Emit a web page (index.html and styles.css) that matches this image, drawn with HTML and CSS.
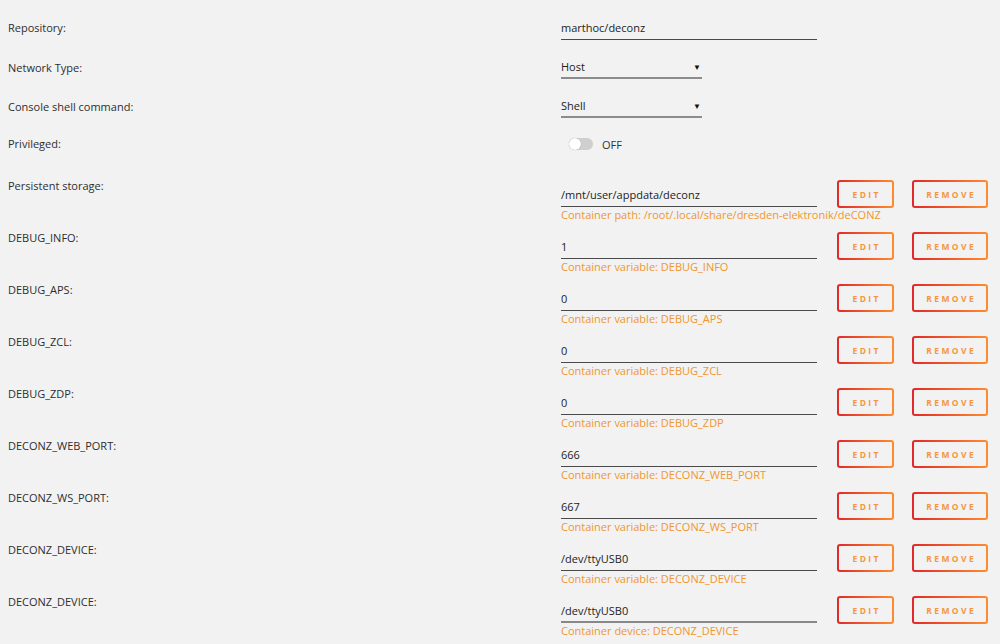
FILE: index.html
```html
<!DOCTYPE html>
<html lang="en">
<head>
    <meta charset="UTF-8">
    <title>Container settings</title>
    <link rel="stylesheet" href="styles.css">
</head>
<body>
    <div class="settings">
        <div class="row r40">
            <div class="label">Repository:</div>
            <div class="input">marthoc/deconz</div>
        </div>
        <div class="row r40">
            <div class="label">Network Type:</div>
            <div class="select">Host<span class="caret">▼</span></div>
        </div>
        <div class="row r38">
            <div class="label">Console shell command:</div>
            <div class="select">Shell<span class="caret">▼</span></div>
        </div>
        <div class="row r36">
            <div class="label">Privileged:</div>
            <div class="toggle">
                <span class="switch"><span class="knob"></span></span>
                <span class="toggle-text">OFF</span>
            </div>
        </div>

        <div class="env-list">
            <div class="env-row">
                <div class="label">Persistent storage:</div>
                <div class="env-field">
                    <div class="input">/mnt/user/appdata/deconz</div>
                    <div class="hint">Container path: /root/.local/share/dresden-elektronik/deCONZ</div>
                </div>
                <button class="btn btn-edit"><span>EDIT</span></button>
                <button class="btn btn-remove"><span>REMOVE</span></button>
            </div>
            <div class="env-row">
                <div class="label">DEBUG_INFO:</div>
                <div class="env-field">
                    <div class="input">1</div>
                    <div class="hint">Container variable: DEBUG_INFO</div>
                </div>
                <button class="btn btn-edit"><span>EDIT</span></button>
                <button class="btn btn-remove"><span>REMOVE</span></button>
            </div>
            <div class="env-row">
                <div class="label">DEBUG_APS:</div>
                <div class="env-field">
                    <div class="input">0</div>
                    <div class="hint">Container variable: DEBUG_APS</div>
                </div>
                <button class="btn btn-edit"><span>EDIT</span></button>
                <button class="btn btn-remove"><span>REMOVE</span></button>
            </div>
            <div class="env-row">
                <div class="label">DEBUG_ZCL:</div>
                <div class="env-field">
                    <div class="input">0</div>
                    <div class="hint">Container variable: DEBUG_ZCL</div>
                </div>
                <button class="btn btn-edit"><span>EDIT</span></button>
                <button class="btn btn-remove"><span>REMOVE</span></button>
            </div>
            <div class="env-row">
                <div class="label">DEBUG_ZDP:</div>
                <div class="env-field">
                    <div class="input">0</div>
                    <div class="hint">Container variable: DEBUG_ZDP</div>
                </div>
                <button class="btn btn-edit"><span>EDIT</span></button>
                <button class="btn btn-remove"><span>REMOVE</span></button>
            </div>
            <div class="env-row">
                <div class="label">DECONZ_WEB_PORT:</div>
                <div class="env-field">
                    <div class="input">666</div>
                    <div class="hint">Container variable: DECONZ_WEB_PORT</div>
                </div>
                <button class="btn btn-edit"><span>EDIT</span></button>
                <button class="btn btn-remove"><span>REMOVE</span></button>
            </div>
            <div class="env-row">
                <div class="label">DECONZ_WS_PORT:</div>
                <div class="env-field">
                    <div class="input">667</div>
                    <div class="hint">Container variable: DECONZ_WS_PORT</div>
                </div>
                <button class="btn btn-edit"><span>EDIT</span></button>
                <button class="btn btn-remove"><span>REMOVE</span></button>
            </div>
            <div class="env-row">
                <div class="label">DECONZ_DEVICE:</div>
                <div class="env-field">
                    <div class="input">/dev/ttyUSB0</div>
                    <div class="hint">Container variable: DECONZ_DEVICE</div>
                </div>
                <button class="btn btn-edit"><span>EDIT</span></button>
                <button class="btn btn-remove"><span>REMOVE</span></button>
            </div>
            <div class="env-row">
                <div class="label">DECONZ_DEVICE:</div>
                <div class="env-field">
                    <div class="input input-dim">/dev/ttyUSB0</div>
                    <div class="hint">Container device: DECONZ_DEVICE</div>
                </div>
                <button class="btn btn-edit"><span>EDIT</span></button>
                <button class="btn btn-remove"><span>REMOVE</span></button>
            </div>
        </div>
    </div>
</body>
</html>
```

FILE: styles.css
```css
* {
    box-sizing: border-box;
    margin: 0;
    padding: 0;
}

body {
    background-color: #f2f2f2;
    color: #333;
    font-family: 'Open Sans', 'Liberation Sans', sans-serif;
    font-size: 11px;
    padding: 8px 0 0 8px;
    overflow: hidden;
}

.row {
    display: grid;
    grid-template-columns: 553px auto;
    align-items: center;
}

.r40 {
    height: 40px;
}

.r38 {
    height: 38px;
}

.r36 {
    height: 36px;
}

.label {
    line-height: 20px;
    color: #2e2e2e;
}

.input {
    width: 256px;
    height: 23px;
    line-height: 22px;
    border-bottom: 1px solid #4a4a4a;
    color: #222;
}

.input-dim {
    border-bottom: 2px solid #888;
}

.select {
    width: 141px;
    height: 22px;
    line-height: 20px;
    border-bottom: 2px solid #8c8c8c;
    color: #222;
    display: flex;
    justify-content: space-between;
    align-items: center;
}

.caret {
    font-size: 8px;
    margin-right: 1px;
    color: #111;
}

.toggle {
    display: flex;
    align-items: center;
    gap: 9px;
    padding-left: 8px;
}

.switch {
    width: 24px;
    height: 12px;
    border-radius: 6px;
    background-color: #cfcfcf;
    display: flex;
    align-items: center;
}

.knob {
    width: 12px;
    height: 12px;
    border-radius: 50%;
    background-color: #fff;
    box-shadow: 0 0 1px rgba(0, 0, 0, 0.35);
}

.toggle-text {
    font-size: 11px;
    color: #333;
}

.env-list {
    margin-top: 14px;
}

.env-row {
    display: grid;
    grid-template-columns: 553px 276px 75px 76px;
    height: 52px;
    align-items: start;
}

.env-field {
    padding-top: 8px;
}

.hint {
    line-height: 16px;
    color: #f0962f;
    white-space: nowrap;
}

.btn {
    margin-top: 4px;
    height: 28px;
    border: 2px solid transparent;
    border-radius: 3px;
    background: linear-gradient(#f2f2f2, #f2f2f2) padding-box,
                linear-gradient(90deg, #e22828, #ff8c2f) border-box;
    font-family: 'Open Sans', 'Liberation Sans', sans-serif;
    font-size: 8.5px;
    font-weight: bold;
    letter-spacing: 2.4px;
    color: #f5963f;
    cursor: pointer;
}

.btn-edit {
    width: 57px;
}

.btn span {
    margin-right: -2.4px;
}
```
